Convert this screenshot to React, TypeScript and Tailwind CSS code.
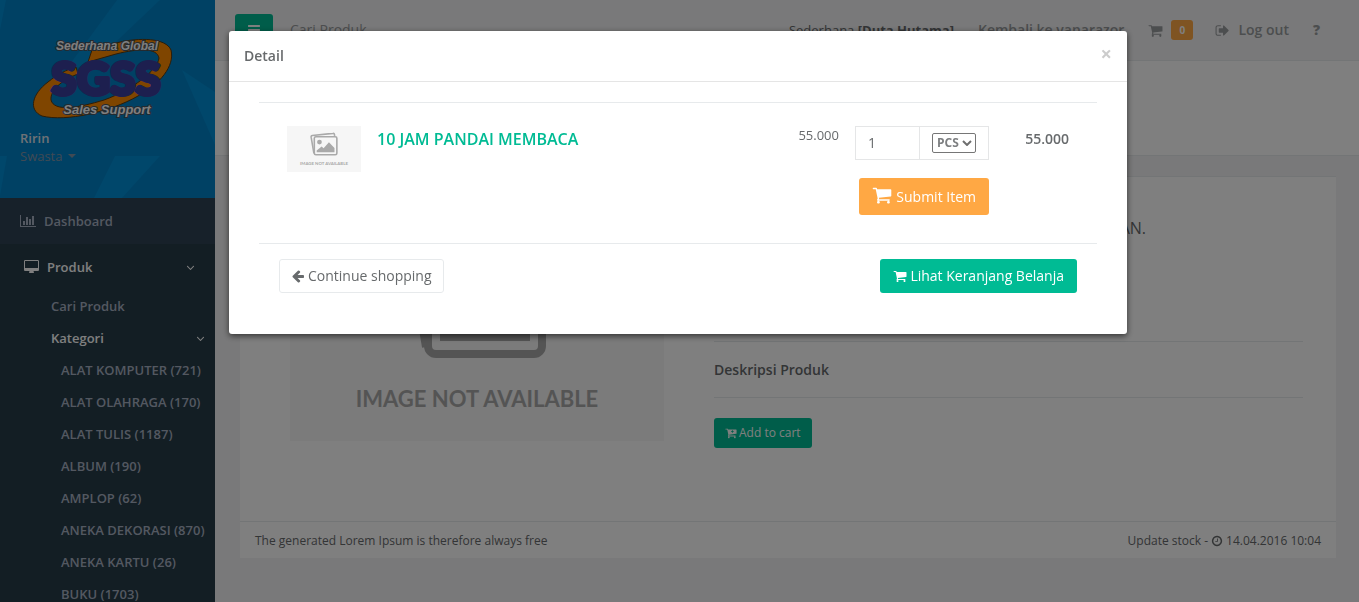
import React from 'react';

const CART =
  'M704 1536q0 52-38 90t-90 38-90-38-38-90 38-90 90-38 90 38 38 90zm896 0q0 52-38 90t-90 38-90-38-38-90 38-90 90-38 90 38 38 90zm128-1088v512q0 24-16.5 42.5t-40.5 21.5l-1044 122q13 60 13 70 0 16-24 64h920q26 0 45 19t19 45-19 45-45 19h-1024q-26 0-45-19t-19-45q0-11 8-31.5t16-36 21.5-40 15.5-29.5l-177-823h-204q-26 0-45-19t-19-45 19-45 45-19h256q16 0 28.5 6.5t19.5 15.5 13 24.5 8 26 5.5 29.5 4.5 26h1201q26 0 45 19t19 45z';
const ARROW_LEFT =
  'M1664 896v128q0 53-32.5 90.5t-84.5 37.5h-704l293 294q38 36 38 90t-38 90l-75 76q-37 37-90 37-52 0-91-37l-651-652q-37-37-37-90 0-52 37-91l651-650q38-38 91-38 52 0 90 38l75 74q38 38 38 91t-38 91l-293 293h704q52 0 84.5 37.5t32.5 90.5z';
const BARS =
  'M1664 1344v128q0 26-19 45t-45 19h-1408q-26 0-45-19t-19-45v-128q0-26 19-45t45-19h1408q26 0 45 19t19 45zm0-512v128q0 26-19 45t-45 19h-1408q-26 0-45-19t-19-45v-128q0-26 19-45t45-19h1408q26 0 45 19t19 45zm0-512v128q0 26-19 45t-45 19h-1408q-26 0-45-19t-19-45v-128q0-26 19-45t45-19h1408q26 0 45 19t19 45z';
const SIGN_OUT =
  'M704 1440q0 4 1 20t.5 26.5-3 23.5-10 19.5-20.5 6.5h-320q-119 0-203.5-84.5t-84.5-203.5v-704q0-119 84.5-203.5t203.5-84.5h320q13 0 22.5 9.5t9.5 22.5q0 4 1 20t.5 26.5-3 23.5-10 19.5-20.5 6.5h-320q-66 0-113 47t-47 113v704q0 66 47 113t113 47h312l11.5 1 11.5 3 8 5.5 7 9 2 13.5zm928-544q0 26-19 45l-544 544q-19 19-45 19t-45-19-19-45v-288h-448q-26 0-45-19t-19-45v-384q0-26 19-45t45-19h448v-288q0-26 19-45t45-19 45 19l544 544q19 19 19 45z';
const CLOCK =
  'M1024 544v448q0 14-9 23t-23 9h-320q-14 0-23-9t-9-23v-64q0-14 9-23t23-9h224v-352q0-14 9-23t23-9h64q14 0 23 9t9 23zm416 352q0-148-73-273t-198-198-273-73-273 73-198 198-73 273 73 273 198 198 273 73 273-73 198-198 73-273zm224 0q0 209-103 385.5t-279.5 279.5-385.5 103-385.5-103-279.5-279.5-103-385.5 103-385.5 279.5-279.5 385.5-103 385.5 103 279.5 279.5 103 385.5z';
const DESKTOP =
  'M1792 992v-832q0-13-9.5-22.5t-22.5-9.5h-1600q-13 0-22.5 9.5t-9.5 22.5v832q0 13 9.5 22.5t22.5 9.5h1600q13 0 22.5-9.5t9.5-22.5zm128-832v1088q0 66-47 113t-113 47h-544q0 37 16 77.5t32 71 16 43.5q0 26-19 45t-45 19h-512q-26 0-45-19t-19-45q0-14 16-44t32-70 16-78h-544q-66 0-113-47t-47-113v-1088q0-66 47-113t113-47h1600q66 0 113 47t47 113z';
const BAR_CHART =
  'M640 896v512h-256v-512h256zm384-512v1024h-256v-1024h256zm1024 1152v128h-2048v-1536h128v1408h1920zm-640-896v768h-256v-768h256zm384-384v1152h-256v-1152h256z';
const ANGLE_DOWN =
  'M1395 736q0 13-10 23l-466 466q-10 10-23 10t-23-10l-466-466q-10-10-10-23t10-23l50-50q10-10 23-10t23 10l393 393 393-393q10-10 23-10t23 10l50 50q10 10 10 23z';

function Icon({ d, className, box = '0 0 1792 1792' }: { d: string; className: string; box?: string }) {
  return (
    <svg viewBox={box} fill="currentColor" aria-hidden="true" className={`shrink-0 ${className}`}>
      <path d={d} />
    </svg>
  );
}

function NoImage({ className }: { className: string }) {
  return (
    <svg viewBox="0 0 374 232" role="img" aria-label="Image not available" className={className}>
      <rect width="374" height="232" fill="#f6f6f6" />
      <g fill="none" stroke="#a9a9a9" strokeWidth="8" strokeLinejoin="round">
        <path d="M136 138L122 56Q121 49 128 48L232 37Q239 36 240 43L241 50" />
        <rect x="138" y="54" width="114" height="91" rx="8" fill="#f6f6f6" />
      </g>
      <circle cx="164" cy="81" r="12" fill="#a9a9a9" />
      <path d="M150 132V123L175 103L185 112L212 82L240 111V132Z" fill="#a9a9a9" />
      <text
        x="187"
        y="198"
        textAnchor="middle"
        fill="#a9a9a9"
        fontSize="22"
        fontWeight="700"
        fontFamily="Lato, 'Open Sans', sans-serif"
      >
        IMAGE NOT AVAILABLE
      </text>
    </svg>
  );
}

function Logo() {
  return (
    <svg viewBox="0 0 144 84" role="img" aria-label="Sederhana Global SGSS Sales Support" className="h-[84px] w-36">
      <path
        fillRule="evenodd"
        fill="#ff8a00"
        stroke="#5a3a10"
        strokeWidth="1"
        d="M84 7C108 1 134 2 139 14C143 30 128 48 106 60C78 76 34 86 10 80C-4 74 0 58 16 46C26 38 34 34 44 31L46 38C30 44 18 54 19 64C22 76 46 72 72 64C100 54 126 34 127 22C125 12 108 12 84 18L56 26L60 14C68 10 76 9 84 7Z"
      />
      <text
        x="74"
        y="59"
        textAnchor="middle"
        fontSize="46"
        fontWeight="900"
        fontFamily="Lato, 'Liberation Sans', sans-serif"
        fill="#3a3f9f"
        stroke="#3a3f9f"
        strokeWidth="4"
        strokeLinejoin="round"
        paintOrder="stroke"
      >
        SGSS
      </text>
      <g
        fill="#ffffff"
        stroke="#4a5560"
        strokeWidth="2"
        paintOrder="stroke"
        fontWeight="700"
        fontStyle="italic"
        textAnchor="middle"
        fontFamily="'Liberation Sans', sans-serif"
      >
        <text x="75" y="14" fontSize="12">
          Sederhana Global
        </text>
        <text x="75" y="78" fontSize="13">
          Sales Support
        </text>
      </g>
    </svg>
  );
}

const categories = [
  'ALAT KOMPUTER (721)',
  'ALAT OLAHRAGA (170)',
  'ALAT TULIS (1187)',
  'ALBUM (190)',
  'AMPLOP (62)',
  'ANEKA DEKORASI (870)',
  'ANEKA KARTU (26)',
  'BUKU (1703)',
];

function Sidebar() {
  return (
    <aside className="h-screen w-[215px] shrink-0 overflow-hidden bg-[#263c48] text-[13px] leading-5 font-semibold text-[#a7b1c2]">
      <div className="relative h-[198px] overflow-hidden bg-[#0082c8]">
        <svg viewBox="0 0 215 198" preserveAspectRatio="none" aria-hidden="true" className="absolute inset-0 size-full">
          <path
            fill="#0093dc"
            opacity=".7"
            d="M0 0H6L0 30ZM117 0H160L100 57L62 75ZM182 70L215 92V145ZM0 156H7L0 196ZM115 156H160L122 198H94Z"
          />
        </svg>
        <div className="relative flex flex-col px-5 pt-9">
          <div className="pl-3">
            <Logo />
          </div>
          <strong className="mt-2 font-semibold text-[#dfe4ed]">Ririn</strong>
          <a href="#akun" className="flex items-center gap-[6px] leading-4 font-normal text-[#8095a8]">
            Swasta
            <svg viewBox="0 0 8 4" fill="currentColor" aria-hidden="true" className="h-1 w-2">
              <path d="M0 0H8L4 4Z" />
            </svg>
          </a>
        </div>
      </div>
      <nav>
        <a href="#dashboard" className="flex h-[46px] items-center gap-2 bg-[#2f4254] pl-5">
          <Icon d={BAR_CHART} box="0 0 2048 1792" className="h-[14px] w-4" />
          Dashboard
        </a>
        <a href="#produk" className="flex h-[46px] items-center gap-2 pr-[18px] pl-6 text-white">
          <Icon d={DESKTOP} box="0 0 1920 1792" className="h-[14px] w-[15px]" />
          Produk
          <Icon d={ANGLE_DOWN} className="ml-auto size-[13px]" />
        </a>
        <ul>
          <li>
            <a href="#cari" className="flex h-8 items-center pl-[51px]">
              Cari Produk
            </a>
          </li>
          <li>
            <a href="#kategori" className="flex h-8 items-center pr-2 pl-[51px] text-white">
              Kategori
              <Icon d={ANGLE_DOWN} className="ml-auto size-[13px]" />
            </a>
            <ul>
              {categories.map((c) => (
                <li key={c}>
                  <a href="#kategori" className="flex h-8 items-center pl-[61px] whitespace-nowrap">
                    {c}
                  </a>
                </li>
              ))}
            </ul>
          </li>
        </ul>
      </nav>
    </aside>
  );
}

function TopBar() {
  return (
    <header className="flex h-[61px] items-center border-b border-[#e7eaec] pr-[39px] pl-5 text-sm font-semibold text-[#999c9e]">
      <button type="button" aria-label="Menu" className="flex h-[33px] w-[38px] items-center justify-center rounded-[3px] bg-[#00bb94] text-white">
        <Icon d={BARS} className="size-[14px]" />
      </button>
      <span className="pl-[17px] font-normal">Cari Produk</span>
      <div className="ml-auto flex items-center">
        <span className="text-[13px] font-normal text-[#676a6c]">
          Sederhana <b>[Duta Hutama]</b>
        </span>
        <a href="#kembali" className="ml-6">
          Kembali ke vanarazor
        </a>
        <a href="#keranjang" className="ml-6 flex items-center gap-2">
          <Icon d={CART} className="size-[15px]" />
          <span className="flex h-5 w-[22px] items-center justify-center rounded-[3px] bg-[#ffa844] text-[10px] font-bold text-white">0</span>
        </a>
        <a href="#logout" className="ml-[22px] flex items-center gap-2">
          <Icon d={SIGN_OUT} className="size-[15px]" />
          Log out
        </a>
        <a href="#bantuan" aria-label="Bantuan" className="ml-6 font-extrabold">
          ?
        </a>
      </div>
    </header>
  );
}

function ProductPage() {
  return (
    <main className="pt-5 pr-[23px] pl-[25px]">
      <section className="border-t border-[#e7eaec] bg-white">
        <div className="flex h-[344px] gap-[50px] pt-8 pr-[33px] pl-[50px]">
          <NoImage className="h-[232px] w-[374px] shrink-0" />
          <div className="min-w-0 flex-1">
            <h2 className="w-[432px] pt-[7px] text-right text-base leading-6">BUKU 10 JAM PANDAI MEMBACA DAN PELAJARAN.</h2>
            <hr className="mt-[101px] border-[#e7eaec]" />
            <h4 className="pt-[18px] pb-[17px] text-sm leading-5 font-semibold">Deskripsi Produk</h4>
            <hr className="border-[#e7eaec]" />
            <button type="button" className="mt-5 flex h-[30px] items-center gap-[2px] rounded-[3px] bg-[#00bb94] px-[11px] text-xs text-white">
              <svg viewBox="0 0 1792 1792" aria-hidden="true" className="size-3">
                <path d={CART} fill="currentColor" />
                <path d="M1040 500h130v130h140v110h-140v130h-130v-130h-140v-110h140z" fill="#00bb94" />
              </svg>
              Add to cart
            </button>
          </div>
        </div>
        <footer className="flex items-center justify-between border-t border-[#e7eaec] px-[15px] pt-[9px] pb-[7px] text-xs leading-5">
          <span>The generated Lorem Ipsum is therefore always free</span>
          <span className="flex items-center gap-[3px]">
            Update stock - <Icon d={CLOCK} className="size-3" /> 14.04.2016 10:04
          </span>
        </footer>
      </section>
    </main>
  );
}

function DetailDialog() {
  return (
    <div className="fixed inset-0 flex items-start justify-center bg-black/50 pt-[31px] pr-[3px]">
      <div
        role="dialog"
        aria-modal="true"
        aria-labelledby="detail-title"
        className="w-full max-w-[898px] rounded-[3px] bg-white shadow-[0_2px_6px_rgba(0,0,0,0.6)]"
      >
        <div className="flex h-[51px] items-center justify-between border-b border-[#e5e5e5] px-[15px]">
          <h1 id="detail-title" className="text-sm font-semibold">
            Detail
          </h1>
          <button type="button" aria-label="Tutup" className="pb-1 text-xl leading-5 font-bold text-[#cccccc]">
            ×
          </button>
        </div>
        <div className="px-[30px] pt-5 pb-[41px]">
          <div className="flex h-[142px] items-start border-y border-[#e7eaec] px-7 pt-[23px]">
            <NoImage className="h-[46px] w-[74px]" />
            <h3 className="pl-4 text-base leading-[26px] font-semibold text-[#00bb94]">10 JAM PANDAI MEMBACA</h3>
            <span className="ml-auto text-[13px] leading-[18px]">55.000</span>
            <div className="ml-4 flex flex-col items-end gap-[18px]">
              <div className="flex h-[34px] w-[134px] border border-[#e5e6e7]">
                <input
                  type="text"
                  aria-label="Jumlah"
                  defaultValue="1"
                  className="w-16 border-r border-[#e5e6e7] px-3 text-sm outline-none"
                />
                <div className="flex flex-1 items-center justify-center">
                  <div className="relative flex">
                    <select
                      aria-label="Satuan"
                      className="h-5 w-11 appearance-none rounded-[2px] border border-[#767676] bg-white pl-1 text-xs leading-4 font-bold text-[#7d7f81]"
                    >
                      <option>PCS</option>
                    </select>
                    <svg
                      viewBox="0 0 10 6"
                      fill="none"
                      stroke="#6f6f6f"
                      strokeWidth="2"
                      aria-hidden="true"
                      className="pointer-events-none absolute top-[7px] right-1 h-[6px] w-[10px]"
                    >
                      <path d="M1 1L5 5L9 1" />
                    </svg>
                  </div>
                </div>
              </div>
              <button type="button" className="flex h-[37px] items-center gap-1 rounded-[3px] bg-[#ffa844] px-[13px] text-sm font-medium text-white">
                <Icon d={CART} className="mb-[3px] size-5" />
                Submit Item
              </button>
            </div>
            <strong className="w-20 text-right text-sm leading-[26px] font-semibold">55.000</strong>
          </div>
          <div className="flex items-center justify-between px-5 pt-[15px]">
            <button type="button" className="flex h-[34px] items-center gap-[3px] rounded-[3px] border border-[#e7eaec] px-[11px] text-sm">
              <Icon d={ARROW_LEFT} className="size-[14px]" />
              Continue shopping
            </button>
            <button type="button" className="flex h-[34px] items-center gap-[3px] rounded-[3px] bg-[#00bb94] px-[13px] text-sm font-medium text-white">
              <Icon d={CART} className="size-[14px]" />
              Lihat Keranjang Belanja
            </button>
          </div>
        </div>
      </div>
    </div>
  );
}

export default function App() {
  return (
    <div className="flex h-screen overflow-hidden bg-[#f3f3f4] font-['Open_Sans','Noto_Sans',sans-serif] text-[#676a6c]">
      <Sidebar />
      <div className="min-w-0 flex-1">
        <TopBar />
        <div className="h-[95px] border-b border-[#e7eaec] bg-white" />
        <ProductPage />
      </div>
      <DetailDialog />
    </div>
  );
}
